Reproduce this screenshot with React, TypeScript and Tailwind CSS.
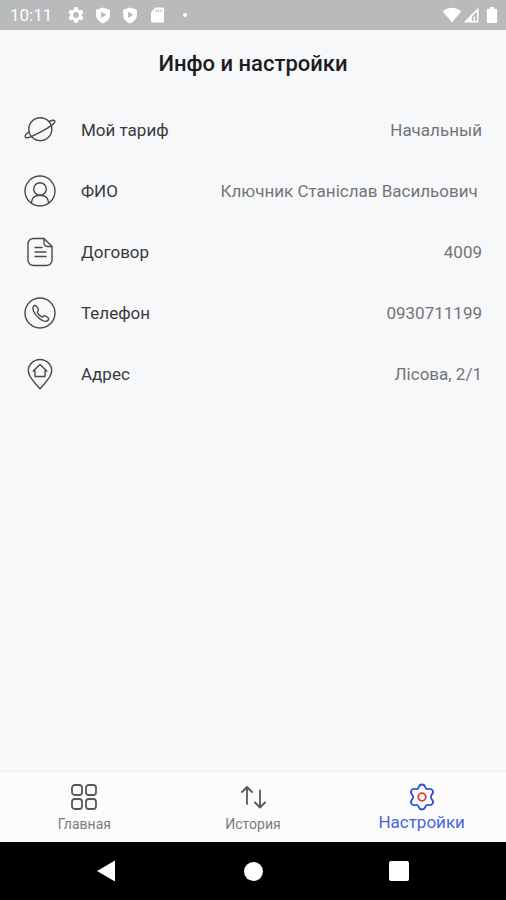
import type { ReactNode } from "react";

type InfoItem = {
  label: string;
  value: string;
  icon: ReactNode;
};

function RowIcon({ children }: { children: ReactNode }) {
  return (
    <svg
      viewBox="0 0 32 32"
      className="size-8 shrink-0"
      fill="none"
      stroke="#4a4a4c"
      strokeWidth="1.4"
      strokeLinecap="round"
      strokeLinejoin="round"
      aria-hidden="true"
    >
      {children}
    </svg>
  );
}

const items: InfoItem[] = [
  {
    label: "Мой тариф",
    value: "Начальный",
    icon: (
      <RowIcon>
        <circle cx="16.3" cy="15.2" r="11.5" />
        <path d="M25.2 7.600c2.300-1.400 4.800-2 5.500-.7.700 1.400-.9 2.900-2.700 4.200-3.200 2.300-7 4.500-10.700 6.500S9.900 21.400 6.600 22.800c-2.200.9-4.500 1.600-5.200.3-.7-1.200.9-3.200 3.500-4.900" />
      </RowIcon>
    ),
  },
  {
    label: "ФИО",
    value: "Ключник Станіслав Васильович ",
    icon: (
      <RowIcon>
        <circle cx="16" cy="16" r="15" />
        <circle cx="16" cy="14" r="6.3" />
        <path d="M7.300 28.200c.3-4.900 3.300-8 8.700-8s8.400 3.100 8.700 8" />
      </RowIcon>
    ),
  },
  {
    label: "Договор",
    value: "4009",
    icon: (
      <RowIcon>
        <path d="M20 2.500H9.500a5.500 5.500 0 0 0-5.500 5.500v16a5.500 5.500 0 0 0 5.500 5.500h13a5.500 5.500 0 0 0 5.500-5.500V10.500z" />
        <path d="M20 2.500v4.500a3.500 3.500 0 0 0 3.500 3.500H28" />
        <path d="M11 11.500h7M11 16h11M11 20.500h11" />
      </RowIcon>
    ),
  },
  {
    label: "Телефон",
    value: "0930711199",
    icon: (
      <RowIcon>
        <circle cx="16" cy="16" r="15" />
        <path d="M9.200 9.900c.7-1.500 2.200-2 3.100-.8l1.900 2.800c.6 1 .3 1.700-.5 2.500-.6.600-.4 1.200.1 1.900 1 1.500 2.200 2.600 3.600 3.400.700.400 1.200.400 1.700-.2.800-.9 1.500-1.100 2.400-.5l2.500 1.700c1.200.9.700 2.200-.7 3.100-1.700 1.100-4.400.5-7.800-2.200-2.800-2.200-5-4.900-6-7.600-.6-1.600-.8-2.900-.3-4.100z" />
      </RowIcon>
    ),
  },
  {
    label: "Адрес",
    value: "Лісова, 2/1",
    icon: (
      <RowIcon>
        <path d="M16 31C13.500 27 4.300 20 4.300 12.800a11.700 11.300 0 0 1 23.400 0C27.700 20 18.500 27 16 31z" />
        <path d="M9.200 13L16 6.500l6.800 6.500H21v5.500H11V13z" />
      </RowIcon>
    ),
  },
];

function ShieldIcon() {
  return (
    <svg viewBox="0 0 16 18" className="h-[17px] w-4" aria-hidden="true">
      <path
        fill="#fff"
        fillRule="evenodd"
        d="M8 .5l7.300 2.500v5.500c0 4-3 7.300-7.300 9C3.700 15.800.7 12.500.7 8.500V3zM6 5v6.600L11.500 8.300z"
      />
    </svg>
  );
}

function StatusBar() {
  return (
    <div className="flex h-[30px] items-center bg-[#b9babc] pl-[10px] pr-2 text-white">
      <span className="w-[58px] text-[17px] leading-5">10:11</span>
      <div className="flex items-center gap-[11px]">
        <svg viewBox="2 2 20 20" className="size-4" aria-hidden="true">
          <path
            fill="#fff"
            d="M19.140 12.940c.04-.3.060-.61.060-.94 0-.32-.02-.64-.07-.94l2.030-1.580a.49.49 0 0 0 .12-.61l-1.920-3.320a.49.49 0 0 0-.59-.22l-2.390.96c-.5-.38-1.030-.7-1.620-.94l-.36-2.540a.48.48 0 0 0-.48-.41h-3.840c-.24 0-.43.170-.47.410l-.36 2.540c-.59.240-1.130.570-1.620.940l-2.390-.96c-.22-.08-.47 0-.59.220L2.740 8.870c-.12.210-.08.470.12.610l2.030 1.580c-.05.300-.09.630-.09.940s.02.640.070.940l-2.030 1.580a.49.49 0 0 0-.12.610l1.920 3.320c.12.220.37.290.59.220l2.390-.96c.5.380 1.030.700 1.620.940l.36 2.540c.05.240.24.410.48.410h3.840c.24 0 .44-.17.470-.41l.36-2.540c.59-.24 1.130-.56 1.620-.94l2.390.96c.22.080.47 0 .59-.22l1.920-3.320a.49.49 0 0 0-.12-.61zM12 15.600A3.600 3.600 0 1 1 12 8.400a3.600 3.600 0 0 1 0 7.200z"
          />
        </svg>
        <ShieldIcon />
        <ShieldIcon />
        <svg viewBox="0 0 16 16" className="size-4" aria-hidden="true">
          <path
            fill="#fff"
            fillRule="evenodd"
            d="M6.500 .5h7A1.500 1.500 0 0 1 15 2v12a1.500 1.500 0 0 1-1.500 1.500h-10A1.500 1.500 0 0 1 2 14V5zM6.500 2.500v2.500h1.200V2.500zm2.400 0v2.500h1.200V2.500zm2.400 0v2.500h1.200V2.500z"
          />
        </svg>
      </div>
      <span className="ml-[18px] size-1 rounded-full bg-white" />
      <div className="ml-auto flex items-center">
        <svg viewBox="0 0 20 16" className="h-4 w-5" aria-hidden="true">
          <path fill="#fff" d="M10 15.500L.7 4.300C6-.4 14-.4 19.300 4.300z" />
        </svg>
        <svg viewBox="0 0 16 16" className="ml-px size-4" aria-hidden="true">
          <path
            fill="#fff"
            fillRule="evenodd"
            d="M15.500.5v15H.5zM14 4.400L8.800 9.600V14h1.700V9.500H12V14h2z"
          />
        </svg>
        <svg viewBox="0 0 12 16" className="ml-[7px] h-4 w-3" aria-hidden="true">
          <path
            fill="#fff"
            d="M4 0h4v1.800h2a1.200 1.200 0 0 1 1.200 1.200v11.800A1.200 1.200 0 0 1 10 16H2a1.200 1.200 0 0 1-1.200-1.200V3A1.200 1.200 0 0 1 2 1.800h2z"
          />
        </svg>
      </div>
    </div>
  );
}

function TabBar() {
  return (
    <nav className="grid h-[71px] grid-cols-3 border-t border-[#eff0f3] bg-[#fbfbfb] text-[#7b7b7d]">
      <button type="button" className="flex flex-col items-center pt-[11px]">
        <svg
          viewBox="0 0 28 28"
          className="size-7"
          fill="none"
          stroke="#58585a"
          strokeWidth="1.8"
          aria-hidden="true"
        >
          <rect x="2" y="2" width="10" height="10" rx="2.8" />
          <rect x="16" y="2" width="10" height="10" rx="2.8" />
          <rect x="2" y="16" width="10" height="10" rx="2.8" />
          <rect x="16" y="16" width="10" height="10" rx="2.8" />
        </svg>
        <span className="mt-[3px] text-sm leading-5">Главная</span>
      </button>
      <button type="button" className="flex flex-col items-center pt-[11px]">
        <svg
          viewBox="0 0 28 28"
          className="size-7"
          fill="none"
          stroke="#58585a"
          strokeWidth="1.8"
          strokeLinecap="round"
          strokeLinejoin="round"
          aria-hidden="true"
        >
          <path d="M8 21V4M3 9l5-5 5 5" />
          <path d="M21 7.500v17M16 19.500l5 5 5-5" />
        </svg>
        <span className="mt-[3px] text-sm leading-5">История</span>
      </button>
      <button
        type="button"
        aria-current="page"
        className="flex flex-col items-center pt-[11px] text-[#4a66d8]"
      >
        <svg
          viewBox="0 0 28 28"
          className="size-7"
          fill="none"
          strokeWidth="1.8"
          strokeLinejoin="round"
          aria-hidden="true"
        >
          <path
            stroke="#2b50dc"
            d="M10.700 4.200c.5-1.700 1.400-2.700 3.300-2.700s2.800 1 3.300 2.700c.5 1.600 1.600 2.200 3.200 1.800 1.800-.5 3.200-.2 4.100 1.400s.5 2.900-.8 4.200c-1.200 1.200-1.200 3.600 0 4.800 1.300 1.300 1.700 2.600.8 4.200s-2.300 1.900-4.100 1.400c-1.600-.4-2.700.2-3.200 1.800-.5 1.700-1.400 2.700-3.300 2.700s-2.800-1-3.300-2.700c-.5-1.600-1.600-2.200-3.200-1.800-1.800.5-3.200.2-4.100-1.400s-.5-2.900.8-4.200c1.200-1.200 1.200-3.600 0-4.800-1.300-1.300-1.700-2.600-.8-4.200s2.300-1.900 4.100-1.400c1.600.4 2.700-.2 3.200-1.800z"
          />
          <circle cx="14" cy="14" r="3.8" stroke="#e2383c" />
        </svg>
        <span className="mt-px text-[17px] leading-5">Настройки</span>
      </button>
    </nav>
  );
}

function SystemBar() {
  return (
    <div className="flex h-[58px] items-center justify-center gap-[122px] bg-black">
      <button type="button" aria-label="Назад" className="size-6">
        <svg viewBox="0 0 24 24" className="size-6" aria-hidden="true">
          <path fill="#fff" d="M20 1.500v21L2 12z" />
        </svg>
      </button>
      <button type="button" aria-label="Домой" className="flex size-6 items-center justify-center">
        <span className="size-[19px] rounded-full bg-white" />
      </button>
      <button type="button" aria-label="Обзор" className="flex size-6 items-center justify-center">
        <span className="size-5 rounded-xs bg-white" />
      </button>
    </div>
  );
}

export default function App() {
  return (
    <div className="flex min-h-screen flex-col bg-[#f7f8fa] font-['Roboto','Noto_Sans',sans-serif]">
      <StatusBar />
      <main className="flex-1">
        <h1 className="pt-5 pb-[21px] text-center text-[22px] font-medium leading-7 text-[#1c1c1e]">
          Инфо и настройки
        </h1>
        <dl>
          {items.map((item) => (
            <div key={item.label} className="flex h-[61px] items-center px-6">
              {item.icon}
              <dt className="ml-[25px] text-[17px] leading-6 text-[#3a3a3c]">{item.label}</dt>
              <dd className="ml-auto whitespace-pre text-[17px] leading-6 text-[#747477]">
                {item.value}
              </dd>
            </div>
          ))}
        </dl>
      </main>
      <TabBar />
      <SystemBar />
    </div>
  );
}
